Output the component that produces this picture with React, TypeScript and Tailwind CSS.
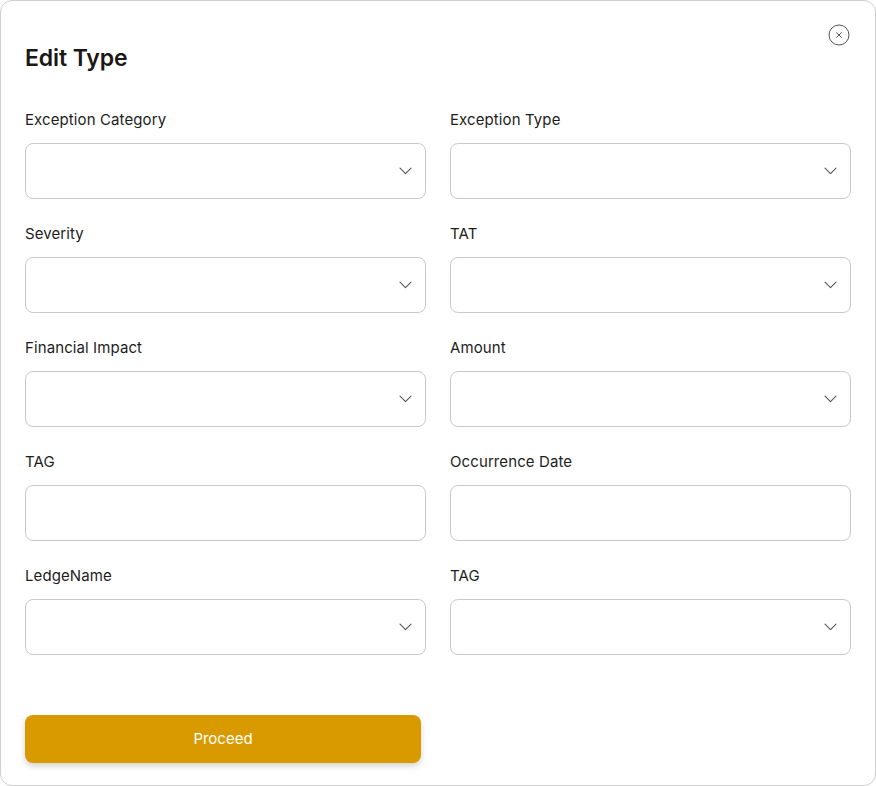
import React from 'react';

interface Field {
  label: string;
  select: boolean;
}

const fields: Field[] = [
  { label: 'Exception Category', select: true },
  { label: 'Exception Type', select: true },
  { label: 'Severity', select: true },
  { label: 'TAT', select: true },
  { label: 'Financial Impact', select: true },
  { label: 'Amount', select: true },
  { label: 'TAG', select: false },
  { label: 'Occurrence Date', select: false },
  { label: 'LedgeName', select: true },
  { label: 'TAG', select: true },
];

const Chevron = () => (
  <svg width="13" height="8" viewBox="0 0 13 8" fill="none" className="text-[#555]">
    <path d="M1 1.2L6.5 6.6L12 1.2" stroke="currentColor" strokeWidth="1.1" strokeLinecap="round" strokeLinejoin="round" />
  </svg>
);

const CloseIcon = () => (
  <svg width="22" height="22" viewBox="0 0 22 22" fill="none" className="text-[#555]">
    <circle cx="11" cy="11" r="10" stroke="currentColor" strokeWidth="1" />
    <path d="M8.6 8.6L13.4 13.4M13.4 8.6L8.6 13.4" stroke="currentColor" strokeWidth="1" strokeLinecap="round" />
  </svg>
);

const App: React.FC = () => {
  return (
    <div className="w-[876px] h-[786px] bg-white" style={{ fontFamily: 'Inter, "Noto Sans", sans-serif' }}>
      <div className="h-full border border-[#cfcfcf] rounded-[12px] px-[24px] pt-[23px] flex flex-col">
        <div className="flex justify-between items-start">
          <h1 className="mt-[20px] text-[23px] leading-[28px] font-semibold text-[#1b1814] tracking-[-0.1px]">Edit Type</h1>
          <button className="mr-[1px]">
            <CloseIcon />
          </button>
        </div>

        <div className="grid grid-cols-2 gap-x-[24px] gap-y-[25px] mt-[38px]">
          {fields.map((f, i) => (
            <div key={i} className="flex flex-col">
              <label className="text-[15px] leading-[20px] text-[#1d1d1d] font-normal tracking-[0.1px]">{f.label}</label>
              <div className="mt-[13px] h-[56px] border border-[#c9c9c9] rounded-[8px] flex items-center justify-end pr-[13px]">
                {f.select && <Chevron />}
              </div>
            </div>
          ))}
        </div>

        <div className="mt-[60px]">
          <button className="w-[396px] h-[48px] rounded-[8px] bg-[#d99a00] text-white text-[15px] shadow-[0_3px_6px_rgba(0,0,0,0.18)]">
            Proceed
          </button>
        </div>
      </div>
    </div>
  );
};

export default App;
